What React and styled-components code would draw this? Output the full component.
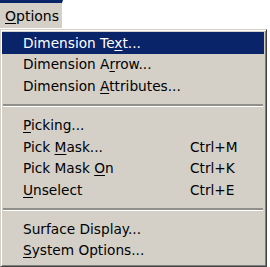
import React from 'react';
import styled, { createGlobalStyle } from 'styled-components';

const GlobalStyle = createGlobalStyle`
  html, body { margin: 0; padding: 0; background: #ffffff; }
  body { width: 270px; height: 267px; overflow: hidden; }
`;

const Page = styled.div`
  width: 270px; height: 267px;
  display: flex; flex-direction: column;
  font-family: "DejaVu Sans", Tahoma, sans-serif;
  font-size: 13.7px; color: #000;
`;

const MenuBar = styled.div`
  height: 29px; display: flex; align-items: flex-start;
`;

const MenuTitle = styled.div`
  width: 63px; height: 28px; box-sizing: border-box;
  border-top: 3px solid #0a246a;
  background: #d4d0c8;
  border-right: 1px solid #ffffff;
  display: flex; align-items: center; padding-left: 5px;
  font-size: 14px;
`;

const Key = styled.span`text-decoration: underline; text-underline-offset: 2px;`;

const Menu = styled.div`
  width: 267px; flex: 1; box-sizing: border-box;
  background: #d4d0c8;
  border-top: 1px solid #d4d0c8; border-left: 1px solid #d4d0c8;
  border-right: 1px solid #404040; border-bottom: 1px solid #404040;
  box-shadow: inset 1px 1px 0 #ffffff, inset -1px -1px 0 #808080;
  padding: 2px 2px 3px 1px;
  display: flex; flex-direction: column;
`;

const Item = styled.div`
  height: 21.5px; flex-shrink: 0;
  display: flex; align-items: center;
  padding-left: 21px; padding-right: 6px;
  background: ${({ $active }) => ($active ? '#0a246a' : 'transparent')};
  color: ${({ $active }) => ($active ? '#ffffff' : '#000000')};
`;

const Label = styled.span`flex: 1; white-space: nowrap;`;
const Shortcut = styled.span`width: 68px; white-space: nowrap;`;

const Separator = styled.div`
  height: 17.75px; flex-shrink: 0;
  display: flex; flex-direction: column; justify-content: center;
  &::before { content: ''; display: block; height: 2px; background: #918f8a; margin: 0 1px; }
  &::after { content: ''; display: block; height: 1px; background: #ffffff; margin: 0 1px; }
`;

const entries = [
  { pre: 'Dimension Te', key: 'x', post: 't...', active: true },
  { pre: 'Dimension A', key: 'r', post: 'row...' },
  { pre: 'Dimension ', key: 'A', post: 'ttributes...' },
  'sep',
  { pre: '', key: 'P', post: 'icking...' },
  { pre: 'Pick ', key: 'M', post: 'ask...', shortcut: 'Ctrl+M' },
  { pre: 'Pick Mask ', key: 'O', post: 'n', shortcut: 'Ctrl+K' },
  { pre: '', key: 'U', post: 'nselect', shortcut: 'Ctrl+E' },
  'sep',
  { pre: 'Surface Display...', key: '', post: '' },
  { pre: '', key: 'S', post: 'ystem Options...' },
];

export default function App() {
  return (
    <Page>
      <GlobalStyle />
      <MenuBar>
        <MenuTitle><Key>O</Key>ptions</MenuTitle>
      </MenuBar>
      <Menu>
        {entries.map((e, i) =>
          e === 'sep' ? (
            <Separator key={i} />
          ) : (
            <Item key={i} $active={e.active}>
              <Label>{e.pre}{e.key && <Key>{e.key}</Key>}{e.post}</Label>
              {e.shortcut && <Shortcut>{e.shortcut}</Shortcut>}
            </Item>
          )
        )}
      </Menu>
    </Page>
  );
}
